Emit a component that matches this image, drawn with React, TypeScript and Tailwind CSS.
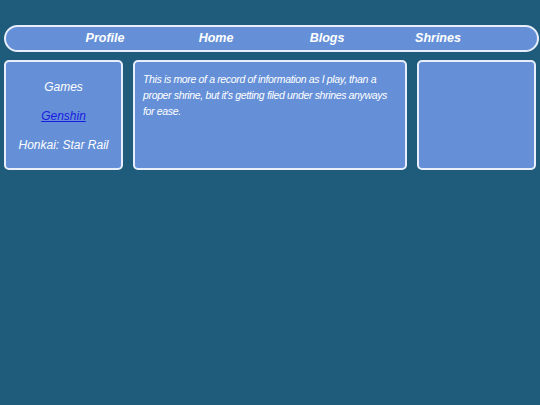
const font = { fontFamily: '"Liberation Sans", Arial, sans-serif' };

export default function App() {
  return (
    <div className="min-h-[405px] w-[540px] bg-[#1f5b7b] pt-[25px] text-white" style={font}>
      <nav className="ml-[4px] mr-[1px] flex h-[27px] items-center justify-center rounded-full border-2 border-[#e8eefa] bg-[#6590d8]">
        <div className="grid grid-cols-[repeat(4,111px)] justify-items-center text-[12.5px] font-bold italic">
          <a href="#">Profile</a>
          <a href="#">Home</a>
          <a href="#">Blogs</a>
          <a href="#">Shrines</a>
        </div>
      </nav>

      <div className="mt-[8px] ml-[4px] flex h-[110px] w-[532px] gap-[10px]">
        <aside className="flex w-[119px] flex-col items-center rounded-[5px] border-2 border-[#e8eefa] bg-[#6590d8] pt-[17px] text-[12px] italic">
          <span className="leading-[16px]">Games</span>
          <a href="#" className="mt-[13px] leading-[16px] text-[#1a1ae0] underline">Genshin</a>
          <span className="mt-[13px] leading-[16px]">Honkai: Star Rail</span>
        </aside>

        <main className="w-[274px] rounded-[5px] border-2 border-[#e8eefa] bg-[#6590d8] px-[8px] pt-[9px] text-[10.5px] leading-[16px] italic">
          <p className="whitespace-nowrap tracking-[-0.35px]">
            This is more of a record of information as I play, than a
            <br />
            proper shrine, but it's getting filed under shrines anyways
            <br />
            for ease.
          </p>
        </main>

        <aside className="w-[119px] rounded-[5px] border-2 border-[#e8eefa] bg-[#6590d8]" />
      </div>
    </div>
  );
}
